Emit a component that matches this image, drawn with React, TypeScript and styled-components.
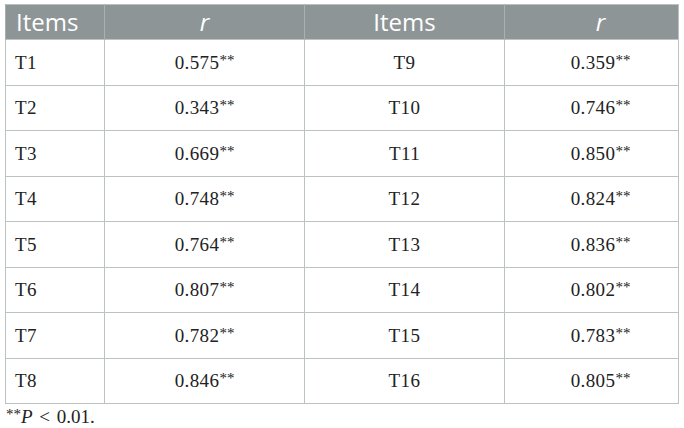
import React from "react";
import styled, { createGlobalStyle } from "styled-components";

const Global = createGlobalStyle`
  html, body { margin: 0; padding: 0; background: #ffffff; }
  body { width: 684px; height: 428px; overflow: hidden; }
`;

const Page = styled.div`
  padding: 4px 6px 0 5px;
`;

const Table = styled.table`
  border-collapse: collapse;
  width: 673px;
  table-layout: fixed;
  border: 1px solid #b9c2bd;
`;

const HeadCell = styled.th<{ $italic?: boolean; $align?: "left" | "center"; $shift?: number }>`
  background: #8e9597;
  color: #ffffff;
  font-family: "Open Sans", "Noto Sans", sans-serif;
  font-weight: 400;
  font-size: 24px;
  font-style: ${(p) => (p.$italic ? "italic" : "normal")};
  height: 34px;
  padding: 0 0 0 ${(p) => (p.$align === "left" ? 10 : p.$shift ?? 0)}px;
  text-align: ${(p) => p.$align ?? "center"};
  border-left: 1px solid #a9b0b2;
  vertical-align: middle;
  line-height: 1;
`;

const Cell = styled.td<{ $align?: "left" | "center"; $shift?: number }>`
  font-family: "Liberation Serif", "Times New Roman", serif;
  font-size: 19px;
  letter-spacing: 0.4px;
  color: #222222;
  height: 44.5px;
  padding: 0 0 0 ${(p) => (p.$align === "left" ? 9 : p.$shift ?? 0)}px;
  text-align: ${(p) => p.$align ?? "center"};
  border: 1px solid #bcc2bf;
  vertical-align: middle;
  line-height: 1;
`;

const Star = styled.sup`
  font-size: 15px;
  letter-spacing: 0;
  vertical-align: 4px;
  line-height: 0;
`;

const Note = styled.div`
  font-family: "Liberation Serif", "Times New Roman", serif;
  font-size: 19px;
  color: #222222;
  padding: 3px 0 0 1px;
  line-height: 1.1;
  word-spacing: 2px;
`;

const Italic = styled.i`
  font-style: italic;
`;

const rows: [string, string, string, string][] = [
  ["T1", "0.575", "T9", "0.359"],
  ["T2", "0.343", "T10", "0.746"],
  ["T3", "0.669", "T11", "0.850"],
  ["T4", "0.748", "T12", "0.824"],
  ["T5", "0.764", "T13", "0.836"],
  ["T6", "0.807", "T14", "0.802"],
  ["T7", "0.782", "T15", "0.783"],
  ["T8", "0.846", "T16", "0.805"],
];

export default function App() {
  return (
    <>
      <Global />
      <Page>
        <Table>
          <colgroup>
            <col style={{ width: 99 }} />
            <col style={{ width: 200 }} />
            <col style={{ width: 200 }} />
            <col style={{ width: 174 }} />
          </colgroup>
          <thead>
            <tr>
              <HeadCell $align="left">Items</HeadCell>
              <HeadCell $italic>r</HeadCell>
              <HeadCell>Items</HeadCell>
              <HeadCell $italic $shift={18}>r</HeadCell>
            </tr>
          </thead>
          <tbody>
            {rows.map((r) => (
              <tr key={r[0]}>
                <Cell $align="left">{r[0]}</Cell>
                <Cell>
                  {r[1]}
                  <Star>**</Star>
                </Cell>
                <Cell>{r[2]}</Cell>
                <Cell $shift={18}>
                  {r[3]}
                  <Star>**</Star>
                </Cell>
              </tr>
            ))}
          </tbody>
        </Table>
        <Note>
          <Star>**</Star>
          <Italic>P</Italic> &lt; 0.01.
        </Note>
      </Page>
    </>
  );
}
